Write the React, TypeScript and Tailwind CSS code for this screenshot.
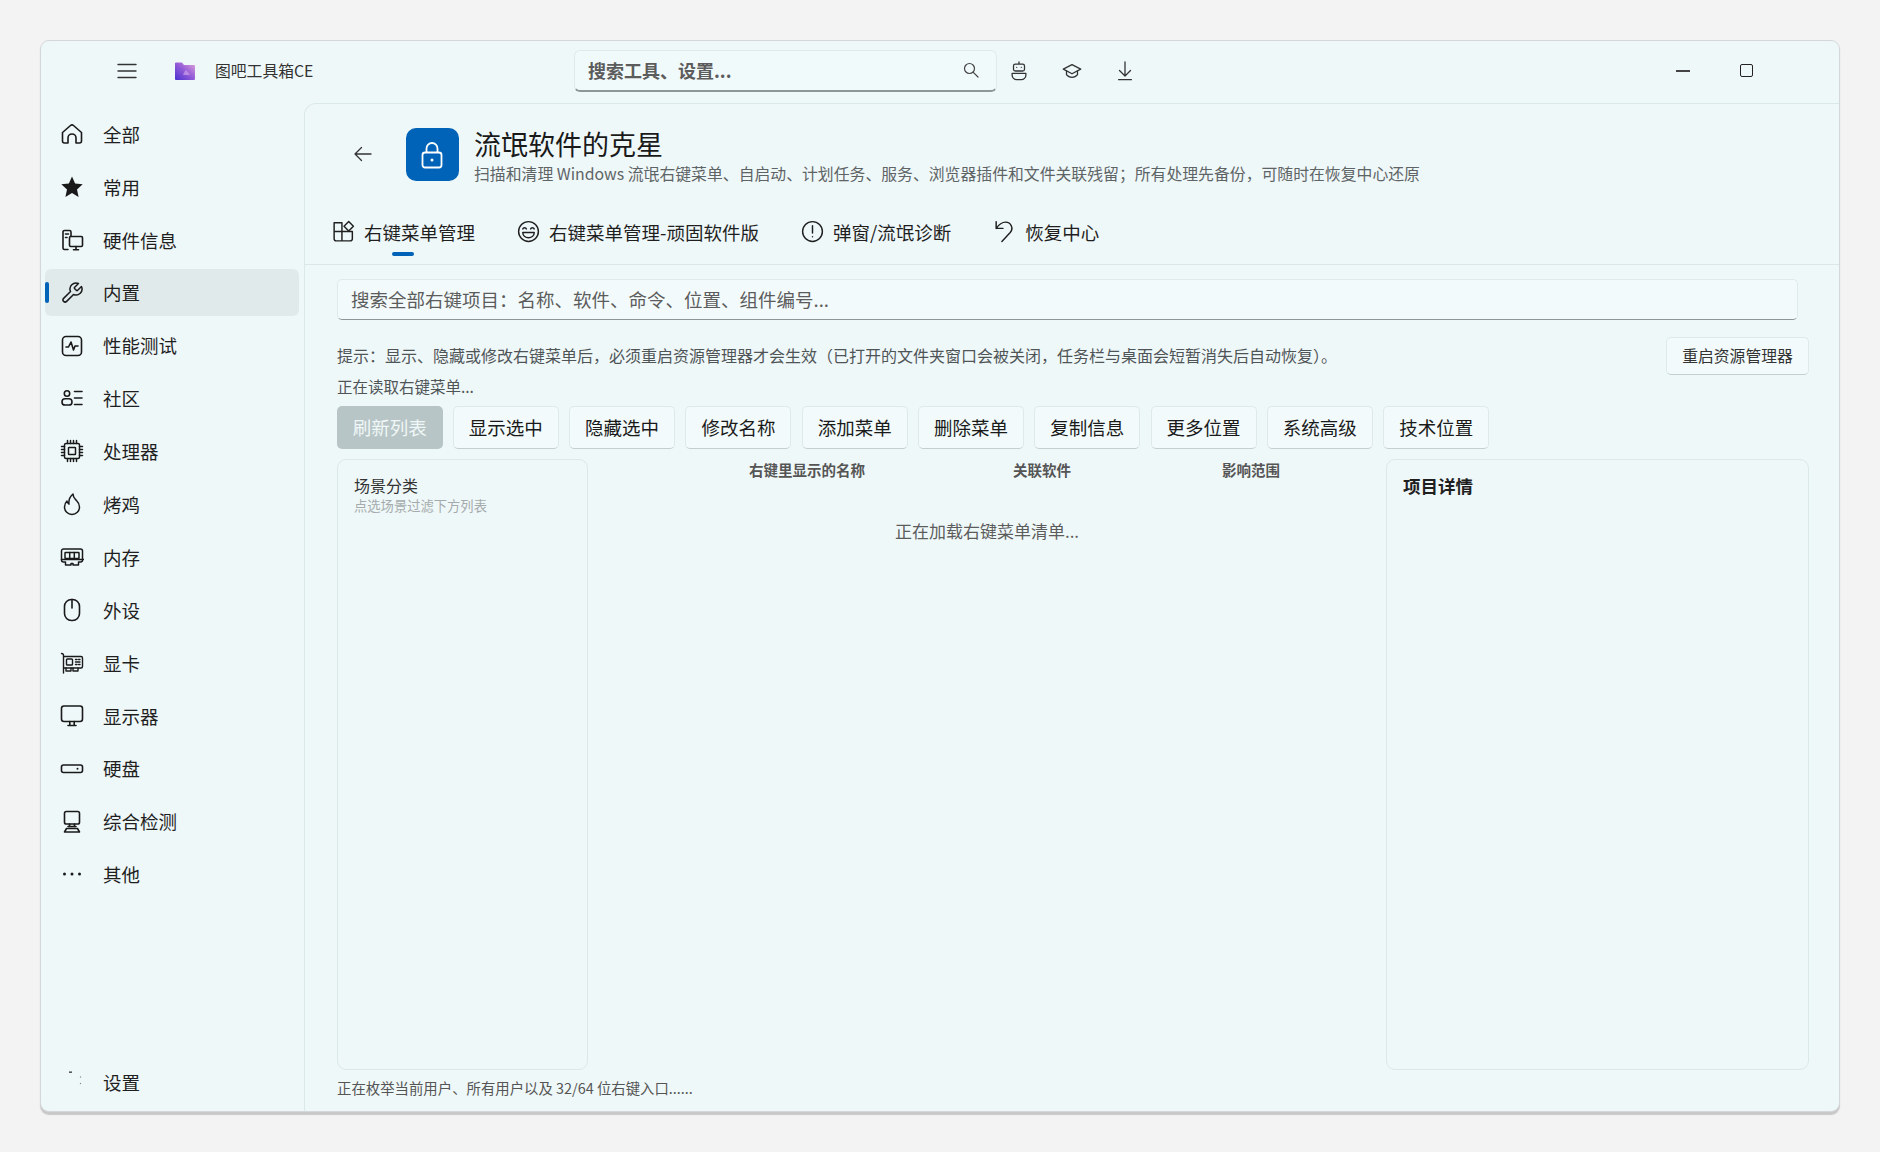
import type { ReactNode } from 'react';

const FONT = "font-['Noto_Sans_CJK_SC','Noto_Sans',sans-serif]";

function Ico({ children, size = 24, w = 1.6 }: { children: ReactNode; size?: number; w?: number }) {
  return (
    <svg width={size} height={size} viewBox="0 0 24 24" fill="none" stroke="currentColor" strokeWidth={w} strokeLinecap="round" strokeLinejoin="round">
      {children}
    </svg>
  );
}

const navItems: { label: string; icon: ReactNode }[] = [
  { label: '全部', icon: <Ico><path d="M2.500 10.500 10.500 3.500a2.300 2.300 0 0 1 3 0l8 7V19a2 2 0 0 1-2 2H16v-5a4 4 0 0 0-8 0v5H4.500a2 2 0 0 1-2-2z" /></Ico> },
  { label: '常用', icon: <svg width="26" height="26" viewBox="0 0 24 24" fill="#1a1a1a"><path d="m12 1.500 3.100 7 7.600.8-5.700 5.100 1.600 7.500L12 18l-6.600 3.900L7 14.400 1.300 9.300l7.600-.8z" /></svg> },
  { label: '硬件信息', icon: <Ico><path d="M8 21.500H4.500A1.500 1.500 0 0 1 3 20V4a1.500 1.500 0 0 1 1.500-1.500h5A1.500 1.500 0 0 1 11 4v4M5.500 6h3M5.500 9.500h1.500" /><rect x="9.500" y="8.500" width="13" height="10" rx="1.200" /><path d="M13.500 21.800h5M16 18.500v3.300" /></Ico> },
  { label: '内置', icon: <Ico size={26} w={1.500}><path d="M14.700 6.300a1 1 0 0 0 0 1.400l1.600 1.600a1 1 0 0 0 1.400 0l3.770-3.770a6 6 0 0 1-7.940 7.940l-6.910 6.910a2.120 2.120 0 0 1-3-3l6.910-6.910a6 6 0 0 1 7.940-7.940l-3.760 3.760z" /></Ico> },
  { label: '性能测试', icon: <Ico><rect x="2.500" y="2.500" width="19" height="19" rx="3.500" /><path d="M6 13h2.500L11 8l2.500 8 1.500-4h3" /></Ico> },
  { label: '社区', icon: <Ico><circle cx="7" cy="7.500" r="2.700" /><rect x="2" y="12.800" width="10" height="6.200" rx="3.100" /><path d="M14.500 5.500H22M14.500 12H22M14.500 18.500H22" /></Ico> },
  { label: '处理器', icon: <Ico w={1.500}><rect x="4.500" y="4.500" width="15" height="15" rx="1.500" /><rect x="8.500" y="8.500" width="7" height="7" rx="0.500" /><path d="M7.500 1.500v3M10.500 1.500v3M13.500 1.500v3M16.500 1.500v3M7.500 19.500v3M10.500 19.500v3M13.500 19.500v3M16.500 19.500v3M1.500 7.500h3M1.500 10.500h3M1.500 13.500h3M1.500 16.500h3M19.500 7.500h3M19.500 10.500h3M19.500 13.500h3M19.500 16.500h3" /></Ico> },
  { label: '烤鸡', icon: <Ico w={1.500}><path d="M13 2c0 3.500 1.500 4.500 3.500 6.500 2 2 3 4 3 6.500a7.500 7.500 0 0 1-15 0c0-2.500 1-4.500 2.500-6 .2 1.500.8 2.500 2 3.200C8.500 8.500 10 4.500 13 2z" /></Ico> },
  { label: '内存', icon: <Ico w={1.500}><path d="M3.500 4h17a2 2 0 0 1 2 2v9a2 2 0 0 1-2 2H18.500v3H13v-1.500h-2V20H5.500v-3h-2a2 2 0 0 1-2-2V6a2 2 0 0 1 2-2z" /><rect x="5" y="7.500" width="14" height="6" rx="0.500" /><path d="M9.700 7.500v6M14.300 7.500v6M1.500 14.500h22" /></Ico> },
  { label: '外设', icon: <Ico><rect x="4.500" y="1.500" width="15" height="21" rx="7" /><path d="M12 1.500V10" /></Ico> },
  { label: '显卡', icon: <Ico w={1.400}><path d="M1.500 2.500c1.200 0 2 .7 2 2V22M3.500 5.500H21a1.500 1.500 0 0 1 1.500 1.500v8.500A1.500 1.500 0 0 1 21 17H3.500" /><rect x="6.500" y="8" width="6" height="6" rx="0.800" /><path d="M15.500 8.500h1.500M18.500 8.500h1.500M15.500 11h4.500M15.500 13.500h1.500M18.500 13.500h1.500M6 17v3h5v-3M13 17v3h5v-3" /></Ico> },
  { label: '显示器', icon: <Ico><rect x="1.500" y="2" width="21" height="15.500" rx="2.500" /><path d="M8 21.500h8M9.800 17.500v4M14.200 17.500v4" /></Ico> },
  { label: '硬盘', icon: <svg width="24" height="24" viewBox="0 0 24 24" fill="none" stroke="currentColor" strokeWidth="1.600"><rect x="1.500" y="8" width="21" height="7.500" rx="2" /><circle cx="17.500" cy="11.800" r="1" fill="currentColor" stroke="none" /></svg> },
  { label: '综合检测', icon: <Ico><rect x="4.500" y="1.500" width="15" height="12.500" rx="1.800" /><path d="M9.500 14v2.500M14.500 14v2.500M8 16.500h8M6.500 18.500h11L19.500 22h-15z" /></Ico> },
  { label: '其他', icon: <svg width="24" height="24" viewBox="0 0 24 24" fill="#1a1a1a"><circle cx="4.500" cy="12" r="1.500" /><circle cx="12" cy="12" r="1.500" /><circle cx="19.500" cy="12" r="1.500" /></svg> },
];

const tabs: { label: string; icon: ReactNode }[] = [
  { label: '右键菜单管理', icon: <Ico size={25} w={1.400}><path d="M3 3.500h7.500V21H5a2 2 0 0 1-2-2zM3 12h17.500v7a2 2 0 0 1-2 2h-8M10.500 12V5" /><path d="m17 2.500 4.500 4.500-4.500 4.500L12.500 7z" /></Ico> },
  { label: '右键菜单管理-顽固软件版', icon: <Ico size={25} w={1.400}><circle cx="12" cy="12" r="9.500" /><path d="M6.500 9.500c.5-1.500 3-1.500 3.500 0M14 9.500c.5-1.500 3-1.500 3.500 0M6.500 13h11c0 3-2.500 5-5.500 5s-5.500-2-5.500-5z" /></Ico> },
  { label: '弹窗/流氓诊断', icon: <Ico size={25} w={1.400}><circle cx="12" cy="12" r="9.500" /><path d="M12 6.500v7M12 17h.01" /></Ico> },
  { label: '恢复中心', icon: <Ico size={25} w={1.400}><path d="M4 2.500V9h6.500M4 9c2.500-3.500 5.500-6 9-6a6 6 0 0 1 4.500 10L9.500 21.500" /></Ico> },
];

const actions = ['显示选中', '隐藏选中', '修改名称', '添加菜单', '删除菜单', '复制信息', '更多位置', '系统高级', '技术位置'];

function Button({ label }: { label: string }) {
  return (
    <button className="h-[43px] w-[106px] rounded-[5px] border border-[#dde9ea] border-b-[#c3cfd0] bg-[#f2fafb] text-[18.500px] leading-none text-[#1a1a1a]">
      {label}
    </button>
  );
}

export default function App() {
  return (
    <div className={`min-h-[1152px] bg-[#f3f3f3] pl-[40px] pt-[40px] ${FONT}`}>
      <div className="flex h-[1072px] w-[1800px] flex-col rounded-[9px] border border-[#d4d8d9] bg-[#eff8f9] shadow-[0_3px_1px_#c8c8c8]">
        {/* title bar */}
        <div className="flex h-[62px] shrink-0 items-center pb-[3px]">
          <div className="ml-[75px] text-[#333]">
            <svg width="22" height="22" viewBox="0 0 22 22" fill="none" stroke="currentColor" strokeWidth="1.400" strokeLinecap="round"><path d="M2 4.500h18M2 11h18M2 17.500h18" /></svg>
          </div>
          <svg className="ml-[36px]" width="22" height="18" viewBox="0 0 22 18">
            <defs>
              <linearGradient id="folder" x1="0" y1="1" x2="1" y2="0">
                <stop offset="0" stopColor="#4a2fd0" />
                <stop offset="0.55" stopColor="#9a60d8" />
                <stop offset="1" stopColor="#e0a4d8" />
              </linearGradient>
            </defs>
            <path d="M1 1.500A1 1 0 0 1 2 .5h6l2 2.500h10a1 1 0 0 1 1 1V17a1 1 0 0 1-1 1H2a1 1 0 0 1-1-1z" fill="url(#folder)" />
            <path d="M9 13l2.500-5 2.500 2 2 3z" fill="#c9a0e8" opacity="0.7" />
          </svg>
          <span className="ml-[19px] w-[102px] whitespace-nowrap text-[15.800px] text-[#333]">图吧工具箱CE</span>
          <div className="ml-[257px] flex h-[42px] w-[423px] items-center justify-between rounded-[6px] border border-[#dfeaeb] border-b-2 border-b-[#8e9697] bg-[#f1fafb] pl-[13px] pr-[16px] text-[#555]">
            <span className="text-[18px] font-bold text-[#5c5c5c]">搜索工具、设置...</span>
            <svg width="18" height="18" viewBox="0 0 18 18" fill="none" stroke="#444" strokeWidth="1.200" strokeLinecap="round"><circle cx="7.500" cy="7.500" r="5" /><path d="m11.300 11.300 4.700 4.700" /></svg>
          </div>
          <div className="ml-[11px] flex items-center gap-[31px] text-[#333]">
            <Ico size={22} w={1.400}>
              <path d="M12 2v2M8 4.500h8a2 2 0 0 1 2 2V10a2 2 0 0 1-2 2H8a2 2 0 0 1-2-2V6.500a2 2 0 0 1 2-2zM9.500 8h.01M14.500 8h.01" />
              <path d="M4.500 14.500h15v2a5 5 0 0 1-5 5h-5a5 5 0 0 1-5-5z" />
            </Ico>
            <Ico size={22} w={1.400}>
              <path d="m12 5 9.500 5-9.500 5-9.500-5z" />
              <path d="M6 12v4c1.500 2 3.500 3 6 3s4.500-1 6-3v-4" />
            </Ico>
            <Ico size={22} w={1.400}>
              <path d="M12 2v15M6 11.500l6 6 6-6M5 21.500h14" />
            </Ico>
          </div>
          <div className="ml-auto mr-[86px] flex items-center gap-[50px]">
            <span className="block h-[2px] w-[14px] bg-[#444]" />
            <span className="block h-[13px] w-[13px] rounded-[2px] border-[1.500px] border-[#222]" />
          </div>
        </div>

        <div className="flex min-h-0 flex-1">
          {/* sidebar */}
          <nav className="flex w-[263px] shrink-0 flex-col pl-[4px] pr-[5px] pt-[7.500px]">
            {navItems.map(item => {
              const active = item.label === '内置';
              return (
                <div key={item.label} className={`relative mb-[5.900px] flex h-[47px] items-center rounded-[6px] pl-[15px] ${active ? 'bg-[#e1eaeb]' : ''}`}>
                  {active && <span className="absolute left-0 top-[13px] h-[21px] w-[3.500px] rounded-full bg-[#0063b8]" />}
                  <span className="flex w-[24px] justify-center text-[#1a1a1a]">{item.icon}</span>
                  <span className="ml-[19px] text-[18.500px] leading-none text-[#1f1f1f]">{item.label}</span>
                </div>
              );
            })}
            <div className="mt-auto mb-[5px] flex h-[47px] items-center pl-[15px]">
              <svg width="24" height="24" viewBox="0 0 24 24">
                <rect x="9" y="0.500" width="3" height="1.300" fill="#333" />
                <circle cx="20.500" cy="6" r="0.700" fill="#888" />
                <circle cx="20.500" cy="12.500" r="0.700" fill="#888" />
              </svg>
              <span className="ml-[19px] text-[18.500px] leading-none text-[#1f1f1f]">设置</span>
            </div>
          </nav>

          {/* main card */}
          <main className="flex min-w-0 flex-1 flex-col rounded-tl-[12px] border-l border-t border-[#dbe8ea]">
            <div className="flex h-[96px] shrink-0 items-center pl-[48px] pt-[5px]">
              <svg className="-mt-[2px] text-[#333]" width="20" height="20" viewBox="0 0 20 20" fill="none" stroke="currentColor" strokeWidth="1.300" strokeLinecap="round" strokeLinejoin="round"><path d="M18 10H2M8.500 3.500 2 10l6.500 6.500" /></svg>
              <div className="ml-[33px] flex h-[53px] w-[53px] items-center justify-center rounded-[10px] bg-[#0063b8] pr-[1px]">
                <svg width="24" height="28" viewBox="0 0 24 28" fill="none" stroke="#fff" strokeWidth="1.800"><rect x="2.500" y="11.500" width="19" height="15" rx="2.500" /><path d="M6.500 11.500V7.500a5.500 5.500 0 0 1 11 0v4" /><circle cx="12" cy="19" r="1.500" fill="#fff" stroke="none" /></svg>
              </div>
              <div className="ml-[15px]">
                <div className="text-[27px] leading-[35px] text-[#1a1a1a]">流氓软件的克星</div>
                <div className="mt-[3px] text-[15.850px] leading-[20px] text-[#5e6466]">扫描和清理 Windows 流氓右键菜单、自启动、计划任务、服务、浏览器插件和文件关联残留；所有处理先备份，可随时在恢复中心还原</div>
              </div>
            </div>

            {/* tabs */}
            <div className="flex h-[65px] shrink-0 items-start gap-[41px] border-b border-[#dbe6e8] pl-[26px] pt-[19px]">
              {tabs.map((tab, i) => (
                <div key={tab.label} className="relative flex items-center gap-[8px] text-[#1f1f1f]">
                  <span className="-translate-y-[1px]">{tab.icon}</span>
                  <span className="whitespace-nowrap text-[18.500px] leading-[26px]">{tab.label}</span>
                  {i === 0 && <span className="absolute left-[61px] top-[33px] h-[3.500px] w-[22px] rounded-full bg-[#0063b8]" />}
                </div>
              ))}
            </div>

            <div className="flex min-h-0 flex-1 flex-col pl-[32px] pr-[30px]">
              <div className="mr-[11px] mt-[14px] flex h-[41px] shrink-0 items-center rounded-[5px] border border-[#dfeaeb] border-b-[#8e9697] bg-[#f2fafb] pl-[13px] text-[18.500px] text-[#5c5c5c]">
                搜索全部右键项目：名称、软件、命令、位置、组件编号...
              </div>
              <div className="mt-[17px] flex h-[38px] shrink-0 items-center justify-between">
                <span className="-mt-[2px] whitespace-nowrap text-[16px] text-[#4f5557]">提示：显示、隐藏或修改右键菜单后，必须重启资源管理器才会生效（已打开的文件夹窗口会被关闭，任务栏与桌面会短暂消失后自动恢复）。</span>
                <button className="h-[38px] w-[143px] rounded-[5px] border border-[#dde9ea] border-b-[#c3cfd0] bg-[#f2fafb] text-[15.800px] text-[#333]">重启资源管理器</button>
              </div>
              <div className="-mt-[1px] h-[24px] shrink-0 text-[15.500px] leading-[24px] text-[#4f5557]">正在读取右键菜单...</div>
              <div className="mt-[7.500px] flex shrink-0 gap-[10.300px]">
                <button className="h-[43px] w-[105.500px] rounded-[5px] bg-[#b7c5c6] text-[18.500px] leading-none text-[#f0f7f7]">刷新列表</button>
                {actions.map(a => <Button key={a} label={a} />)}
              </div>

              <div className="mt-[10px] flex min-h-0 flex-1 gap-[14px]">
                <div className="w-[251px] shrink-0 rounded-[9px] border border-[#dbe8ea] pl-[16px] pt-[13px]">
                  <div className="text-[16px] leading-[24px] text-[#333]">场景分类</div>
                  <div className="text-[13.300px] leading-[18px] text-[#a5abac]">点选场景过滤下方列表</div>
                </div>
                <div className="min-w-0 flex-1">
                  <div className="relative h-[22px] text-[14.500px] font-bold leading-[22px] text-[#555]">
                    <span className="absolute left-[147px] whitespace-nowrap">右键里显示的名称</span>
                    <span className="absolute left-[411px] whitespace-nowrap">关联软件</span>
                    <span className="absolute left-[620px] whitespace-nowrap">影响范围</span>
                  </div>
                  <div className="mt-[38px] text-center text-[17px] leading-[24px] text-[#5c5c5c]">正在加载右键菜单清单...</div>
                </div>
                <div className="w-[423px] shrink-0 rounded-[9px] border border-[#dbe8ea] pl-[16px] pt-[14px]">
                  <div className="text-[17.500px] font-bold leading-[24px] text-[#1f1f1f]">项目详情</div>
                </div>
              </div>
              <div className="h-[41px] shrink-0 pt-[7px] text-[14.400px] leading-[22px] text-[#555]">正在枚举当前用户、所有用户以及 32/64 位右键入口......</div>
            </div>
          </main>
        </div>
      </div>
    </div>
  );
}
